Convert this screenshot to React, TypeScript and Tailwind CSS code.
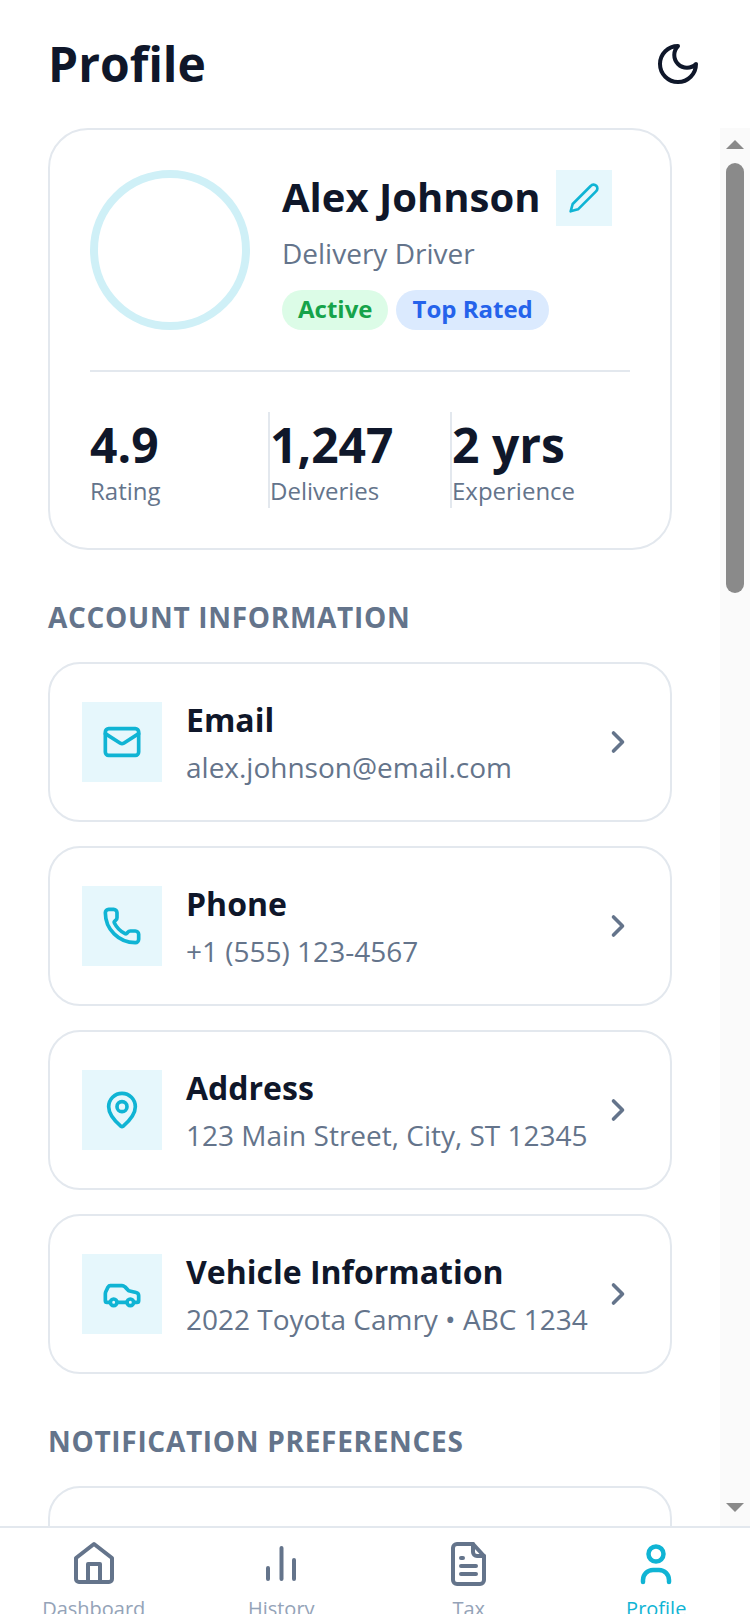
import { Car, ChevronRight, Mail, MapPin, Phone } from 'lucide-react'
import type { ReactNode } from 'react'

const ROWS = [
  { icon: <Mail size={40} strokeWidth={2.2} />, title: 'Email', sub: 'alex.johnson@email.com' },
  { icon: <Phone size={40} strokeWidth={2.2} />, title: 'Phone', sub: '+1 (555) 123-4567' },
  { icon: <MapPin size={40} strokeWidth={2.2} />, title: 'Address', sub: '123 Main Street, City, ST 12345' },
  { icon: <Car size={40} strokeWidth={2.2} />, title: 'Vehicle Information', sub: '2022 Toyota Camry • ABC 1234' },
]

function Stat({ value, label, className }: { value: string; label: string; className: string }) {
  return (
    <div className={`h-[96px] pt-[3px] ${className}`}>
      <div className="text-[48px] leading-[60px] font-bold text-[#0f172a]">{value}</div>
      <div className="text-[24px] leading-[32px] text-[#64748b]">{label}</div>
    </div>
  )
}

function InfoRow({ icon, title, sub }: { icon: ReactNode; title: string; sub: string }) {
  return (
    <div className="flex items-center h-[160px] rounded-[32px] border-2 border-[#e3e8ee] bg-white pl-[32px] pr-[34px]">
      <div className="w-[80px] h-[80px] bg-[#e6f7fc] text-[#10b4d4] flex items-center justify-center shrink-0">{icon}</div>
      <div className="ml-[24px] flex-1 pt-[3px]">
        <div className="text-[32px] leading-[44px] font-bold text-[#0f172a]">{title}</div>
        <div className="mt-[3px] text-[28px] leading-[44px] text-[#64748b] whitespace-nowrap">{sub}</div>
      </div>
      <ChevronRight size={36} strokeWidth={2.4} className="text-[#64748b] shrink-0" />
    </div>
  )
}

function NavItem({ icon, label, active }: { icon: ReactNode; label: string; active?: boolean }) {
  return (
    <div className="flex flex-col items-center">
      <div className={active ? 'text-[#10b4d4]' : 'text-[#64748b]'}>{icon}</div>
      <div className={active ? 'mt-[9px] text-[20px] leading-[28px] text-[#10b4d4]' : 'mt-[9px] text-[20px] leading-[28px] text-[#94a3b8]'}>{label}</div>
    </div>
  )
}

export default function App() {
  return (
    <div className="w-[750px] h-[1624px] bg-white flex flex-col overflow-hidden font-['Open_Sans',sans-serif]">
      <header className="h-[128px] shrink-0 flex items-center justify-between pl-[48px] pr-[48px]">
        <h1 className="text-[48px] leading-[64px] font-bold text-[#0f172a]">Profile</h1>
        <svg width="48" height="48" viewBox="0 0 24 24" fill="none" stroke="currentColor" strokeWidth="2" strokeLinecap="round" strokeLinejoin="round" className="text-[#0f172a]">
          <path d="M12 3a6 6 0 0 0 9 9 9 9 0 1 1-9-9Z" />
        </svg>
      </header>

      <div className="relative flex-1 min-h-0 flex overflow-hidden">
        <main className="w-[720px] pl-[48px] pr-[48px] overflow-hidden">
          <section className="h-[422px] rounded-[40px] border-2 border-[#e3e8ee] bg-white px-[40px] pt-[40px]">
            <div className="flex items-start h-[202px] border-b-2 border-[#e3e8ee]">
              <div className="w-[160px] h-[160px] rounded-full border-8 border-[#cff0f7] shrink-0" />
              <div className="ml-[32px]">
                <div className="flex items-center gap-[16px] h-[56px]">
                  <span className="text-[40px] font-bold text-[#0f172a] leading-[54px] pb-[2px]">Alex Johnson</span>
                  <span className="w-[56px] h-[56px] bg-[#e6f7fc] text-[#10b4d4] flex items-center justify-center">
                    <svg width="32" height="32" viewBox="0 0 24 24" fill="none" stroke="currentColor" strokeWidth="2" strokeLinecap="round" strokeLinejoin="round">
                      <path d="M17 3a2.85 2.83 0 1 1 4 4L7.5 20.5 2 22l1.5-5.5Z" />
                    </svg>
                  </span>
                </div>
                <div className="text-[28px] leading-[40px] text-[#64748b] mt-[7px]">Delivery Driver</div>
                <div className="flex gap-[8px] mt-[17px]">
                  <span className="h-[40px] rounded-full bg-[#dcfce7] text-[#16a34a] px-[16px] text-[24px] leading-[38px] font-bold">Active</span>
                  <span className="h-[40px] rounded-full bg-[#dbeafe] text-[#2563eb] px-[16px] text-[24px] leading-[38px] font-bold">Top Rated</span>
                </div>
              </div>
            </div>
            <div className="flex mt-[40px]">
              <Stat value="4.9" label="Rating" className="w-[178px]" />
              <Stat value="1,247" label="Deliveries" className="w-[182px] border-l-2 border-[#e3e8ee]" />
              <Stat value="2 yrs" label="Experience" className="w-[180px] border-l-2 border-[#e3e8ee]" />
            </div>
          </section>

          <h2 className="mt-[47px] text-[28px] leading-[40px] font-bold uppercase tracking-[0.7px] text-[#64748b]">Account Information</h2>
          <div className="mt-[25px] flex flex-col gap-[24px]">
            {ROWS.map(r => (
              <InfoRow key={r.title} icon={r.icon} title={r.title} sub={r.sub} />
            ))}
          </div>

          <h2 className="mt-[47px] text-[28px] leading-[40px] font-bold uppercase tracking-[0.7px] text-[#64748b]">Notification Preferences</h2>
          <div className="mt-[25px] h-[160px] rounded-[32px] border-2 border-[#e3e8ee] bg-white" />
        </main>

        {/* scrollbar */}
        <div className="w-[30px] bg-[#fafafa] flex flex-col items-center shrink-0">
          <div className="mt-[12px] w-0 h-0 border-x-[9px] border-x-transparent border-b-[9px] border-b-[#8a8a8a]" />
          <div className="mt-[14px] w-[18px] h-[430px] rounded-full bg-[#8a8a8a]" />
          <div className="mt-auto mb-[14px] w-0 h-0 border-x-[9px] border-x-transparent border-t-[9px] border-t-[#8a8a8a]" />
        </div>
      </div>

      <nav className="h-[98px] shrink-0 border-t-2 border-[#e3e8ee] bg-white">
        <div className="h-[86px] grid grid-cols-4 pt-[10px] overflow-hidden">
          <NavItem
            label="Dashboard"
            icon={
              <svg width="48" height="48" viewBox="0 0 48 48" fill="none" stroke="currentColor" strokeWidth="4" strokeLinejoin="round" strokeLinecap="round">
                <path d="M6 20 24 6l18 14v21a3 3 0 0 1-3 3H9a3 3 0 0 1-3-3z" />
                <path d="M18 44V26h12v18" />
              </svg>
            }
          />
          <NavItem
            label="History"
            icon={
              <svg width="48" height="48" viewBox="0 0 48 48" fill="none" stroke="currentColor" strokeWidth="4" strokeLinecap="round">
                <path d="M11 41V30M24.5 41V10M37 41V22" />
              </svg>
            }
          />
          <NavItem
            label="Tax"
            icon={
              <svg width="48" height="48" viewBox="0 0 48 48" fill="none" stroke="currentColor" strokeWidth="4" strokeLinecap="round" strokeLinejoin="round">
                <path d="M28 6H12a4 4 0 0 0-4 4v32a4 4 0 0 0 4 4h23a4 4 0 0 0 4-4V18z" />
                <path d="M28 6v8a4 4 0 0 0 4 4h7M16 20h2M16 28h15M16 36h15" />
              </svg>
            }
          />
          <NavItem
            active
            label="Profile"
            icon={
              <svg width="48" height="48" viewBox="0 0 48 48" fill="none" stroke="currentColor" strokeWidth="4.5" strokeLinecap="round">
                <circle cx="24" cy="16" r="7.5" />
                <path d="M11 44v-2a10 10 0 0 1 10-10h6a10 10 0 0 1 10 10v2" />
              </svg>
            }
          />
        </div>
      </nav>
    </div>
  )
}
